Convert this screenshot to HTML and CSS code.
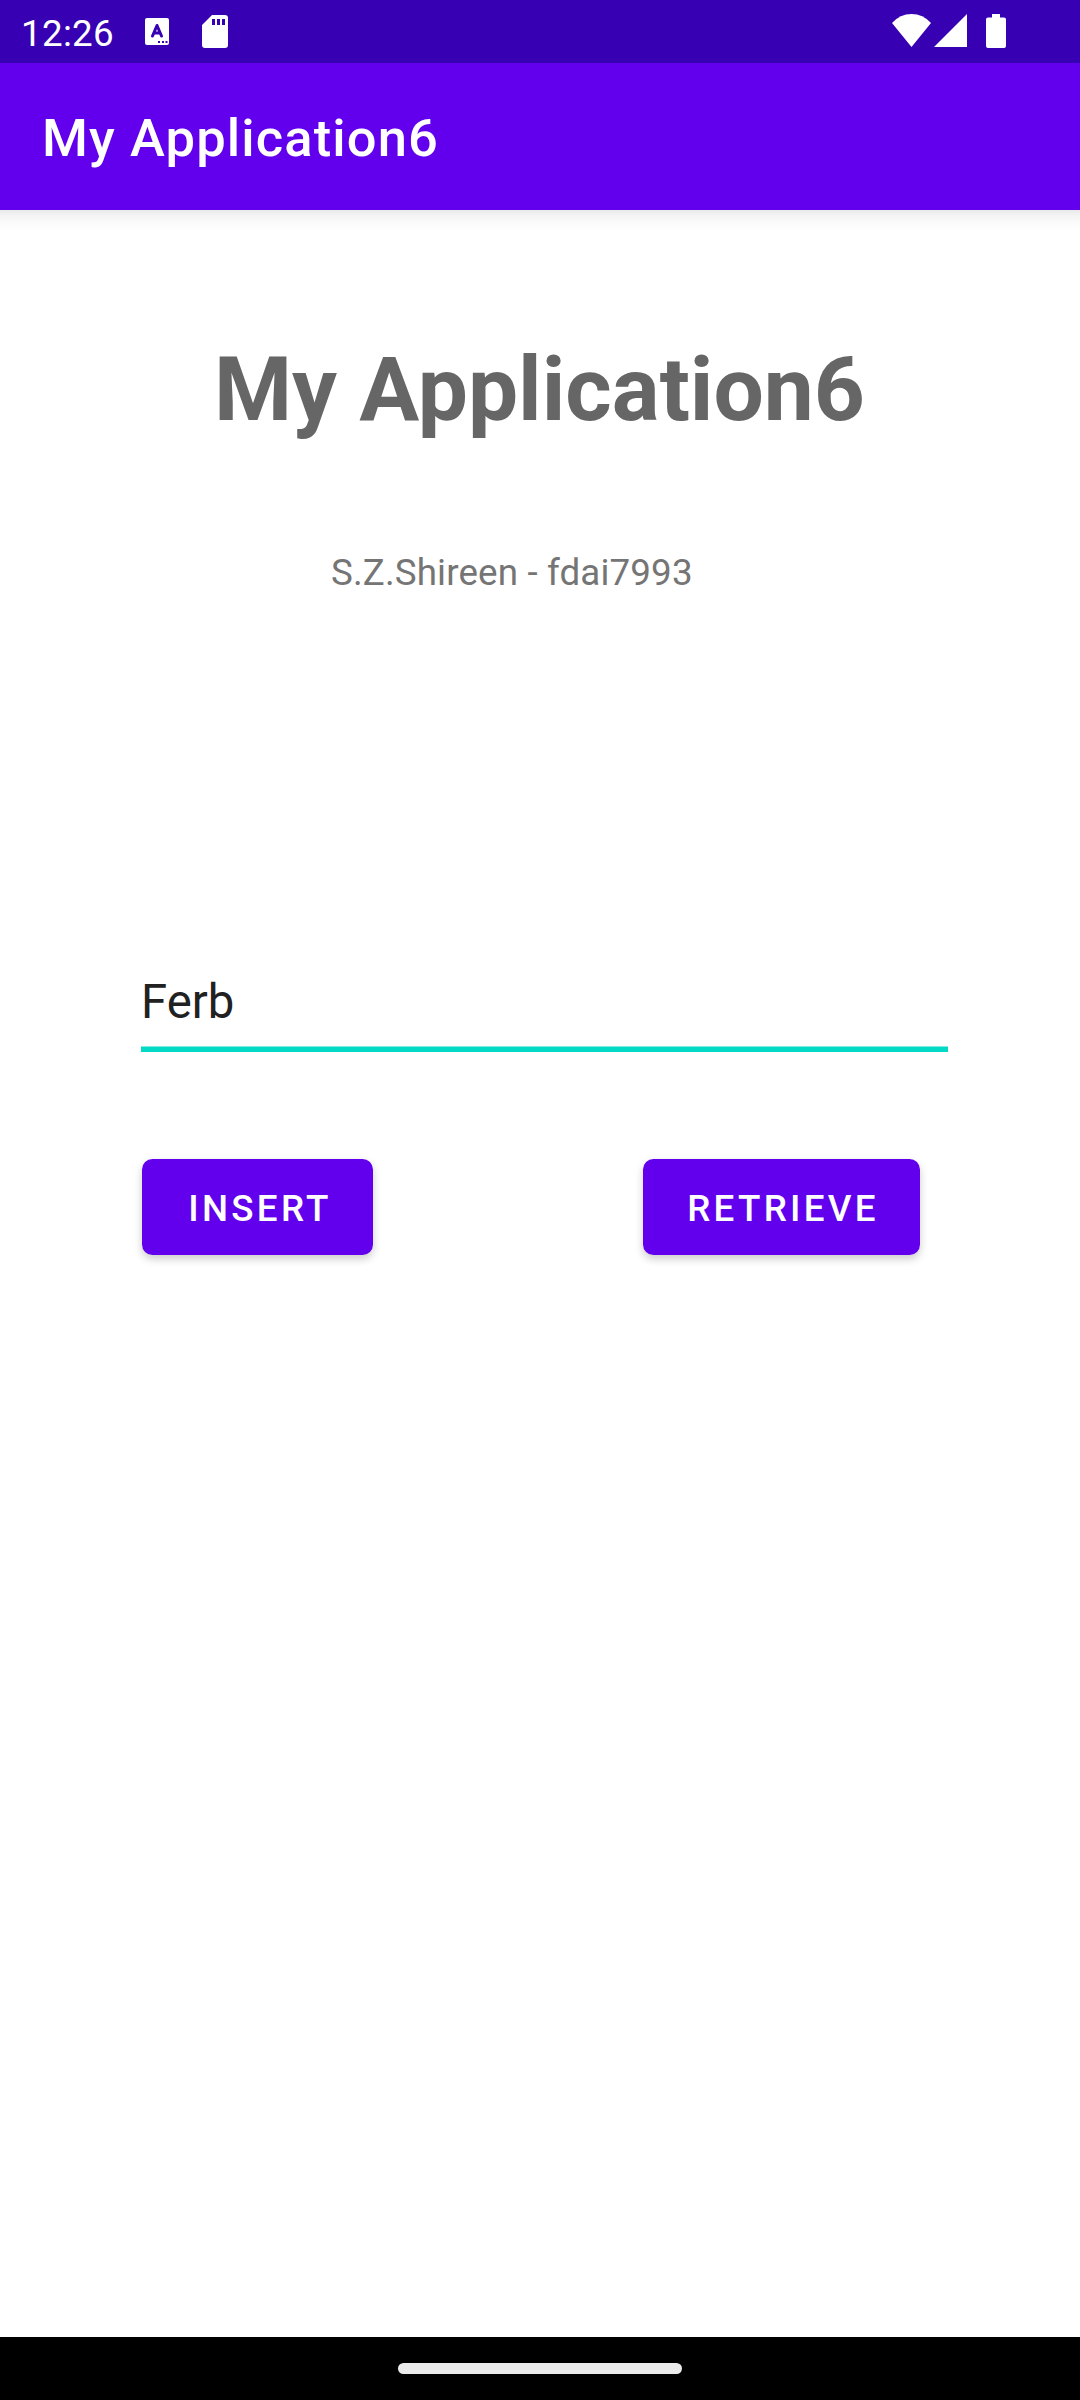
FILE: index.html
```html
<!DOCTYPE html>
<html lang="en">
<head>
<meta charset="utf-8">
<title>My Application6</title>
<link rel="stylesheet" href="styles.css">
</head>
<body>
<div class="screen">
  <div class="status">
    <span class="clock">12:26</span>
    <svg class="notices" width="84" height="34" viewBox="145 15 84 34">
      <path fill="#fff" d="M147 18h20q2 0 2 2v23q0 2-2 2h-20q-2 0-2-2V20q0-2 2-2z"/>
      <path fill="none" stroke="#3700b3" stroke-width="3" stroke-linecap="round" stroke-linejoin="round" d="M152.500 36l4.500-10.500 4.500 10.500M154.500 33h5"/>
      <path fill="#3700b3" d="M158 41h2v2h-2zM162 41h2v2h-2zM165.500 41h2v2h-2z"/>
      <path fill="#fff" fill-rule="evenodd" d="M212 15h13q3 0 3 3v27q0 3-3 3h-20q-3 0-3-3V25zM212 19v6h3v-6zM217 19v6h3v-6zM222 19v6h3v-6z"/>
    </svg>
    <svg class="signals" width="116" height="35" viewBox="891 14 116 35">
      <g fill="#fff">
        <path d="M911.500 47L892 23Q900 14 911.500 14T931 23z"/>
        <path d="M967 14v33h-33z"/>
        <path d="M992 14h8v3.500h4q2 0 2 2V46q0 2-2 2h-16q-2 0-2-2V19.500q0-2 2-2h4z"/>
      </g>
    </svg>
  </div>
  <header class="appbar">My Application6</header>
  <main class="content">
    <h1 class="title">My Application6</h1>
    <p class="author">S.Z.Shireen - fdai7993</p>
    <div class="field">Ferb</div>
    <div class="actions">
      <button class="btn insert">INSERT</button>
      <button class="btn retrieve">RETRIEVE</button>
    </div>
  </main>
  <div class="navbar"><div class="handle"></div></div>
</div>
</body>
</html>
```
FILE: styles.css
```css
body {
  margin: 0;
  background: #fff;
  font-family: Roboto, sans-serif;
}
.screen {
  display: flex;
  flex-direction: column;
  width: 1080px;
  height: 2400px;
  overflow: hidden;
}
.status {
  display: flex;
  align-items: flex-start;
  height: 63px;
  box-sizing: border-box;
  padding: 14px 73px 0 21px;
  background: #3700b3;
}
.clock {
  width: 124px;
  margin-top: -3px;
  color: #fff;
  font-size: 36.750px;
  letter-spacing: .300px;
  line-height: 45px;
}
.notices { margin-top: 1px; }
.signals { margin-left: auto; }
.appbar {
  height: 147px;
  box-sizing: border-box;
  padding: 4px 42px 0;
  background: #6200ee;
  color: #fff;
  font-size: 52.500px;
  font-weight: 500;
  letter-spacing: 1.120px;
  line-height: 142px;
}
.content {
  display: flex;
  flex-direction: column;
  flex: 1;
  background: linear-gradient(#e9e9e9, #f4f4f4 6px, #fbfbfb 13px, #fff 22px);
}
.title {
  margin: 128px 0 0;
  padding-right: 1px;
  color: #666;
  font-size: 89.250px;
  font-weight: 700;
  line-height: 104px;
  text-align: center;
}
.author {
  margin: 109px 0 0 331px;
  color: #757575;
  font-size: 36.750px;
  letter-spacing: .140px;
  line-height: 44px;
}
.field {
  width: 807px;
  height: 78px;
  box-sizing: border-box;
  margin: 379px 0 0 141px;
  border-bottom: 5px solid #03dac5;
  box-shadow: inset 0 -1px #81ece2;
  color: #212121;
  font-size: 47.250px;
  line-height: 56px;
}
.actions {
  display: flex;
  justify-content: space-between;
  margin: 107px 160px 0 142px;
}
.btn {
  height: 96px;
  padding: 3px 0 0 3px;
  border: 0;
  border-radius: 10.500px;
  background: #6200ee;
  box-shadow: 0 4px 8px rgba(0, 0, 0, .2);
  color: #fff;
  font-family: inherit;
  font-size: 36.750px;
  font-weight: 500;
  letter-spacing: 3.280px;
}
.insert { width: 231px; padding-left: 5px; }
.retrieve { width: 277px; }
.navbar {
  display: flex;
  justify-content: center;
  height: 63px;
  box-sizing: border-box;
  padding-top: 26px;
  background: #000;
}
.handle {
  width: 284px;
  height: 11px;
  border-radius: 5.500px;
  background: #ebebeb;
}
```
